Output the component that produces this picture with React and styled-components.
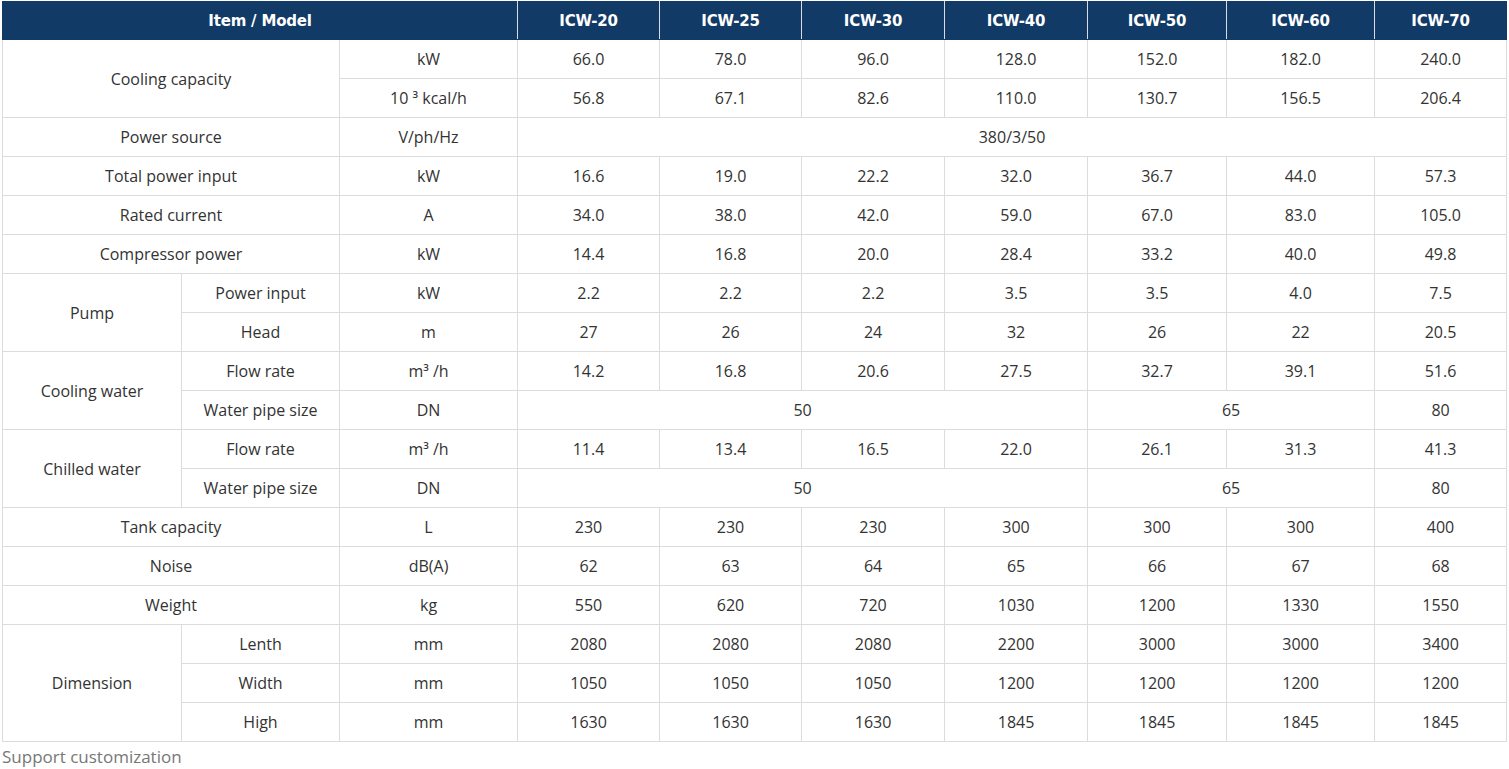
import React from "react";
import styled, { createGlobalStyle } from "styled-components";

const Global = createGlobalStyle`
  html, body { margin: 0; padding: 0; background: #fff; }
  body { font-family: "Open Sans", "Noto Sans CJK SC", sans-serif; }
`;

const Page = styled.div`
  padding: 1px 3px 0 2px;
`;

const Table = styled.table`
  width: 1504px;
  border-collapse: collapse;
  table-layout: fixed;
  font-size: 16px;
  line-height: 20px;
  color: #333;
`;

const Head = styled.th`
  background: #123a66;
  color: #fff;
  font-family: "DejaVu Sans", sans-serif;
  font-weight: 700;
  font-size: 15px;
  letter-spacing: -0.2px;
  height: 37px;
  padding: 0;
  text-align: center;
  border: 1px solid #123a66;
  border-left-color: #d9dde3;
  border-right-color: #d9dde3;
  &:first-child { border-left-color: #123a66; }
  &:last-child { border-right-color: #123a66; }
`;

const Cell = styled.td`
  height: 38px;
  padding: 0;
  text-align: center;
  border: 1px solid #dcdcdc;
  font-weight: 400;
`;

const Note = styled.div`
  font-size: 17px;
  line-height: 22px;
  color: #777;
  padding-top: 4px;
`;

const widths = [179, 158, 178, 142, 142, 143, 143, 139, 148, 132];
const models = ["ICW-20", "ICW-25", "ICW-30", "ICW-40", "ICW-50", "ICW-60", "ICW-70"];

const Vals = ({ v }) => v.map((x, i) => <Cell key={i}>{x}</Cell>);
const Pipe = () => (
  <>
    <Cell colSpan={4}>50</Cell>
    <Cell colSpan={2}>65</Cell>
    <Cell>80</Cell>
  </>
);

export default function App() {
  return (
    <Page>
      <Global />
      <Table>
        <colgroup>
          {widths.map((w, i) => (
            <col key={i} style={{ width: w }} />
          ))}
        </colgroup>
        <thead>
          <tr>
            <Head colSpan={3}>Item / Model</Head>
            {models.map((m) => (
              <Head key={m}>{m}</Head>
            ))}
          </tr>
        </thead>
        <tbody>
          <tr>
            <Cell colSpan={2} rowSpan={2}>Cooling capacity</Cell>
            <Cell>kW</Cell>
            <Vals v={["66.0", "78.0", "96.0", "128.0", "152.0", "182.0", "240.0"]} />
          </tr>
          <tr>
            <Cell>10 ³ kcal/h</Cell>
            <Vals v={["56.8", "67.1", "82.6", "110.0", "130.7", "156.5", "206.4"]} />
          </tr>
          <tr>
            <Cell colSpan={2}>Power source</Cell>
            <Cell>V/ph/Hz</Cell>
            <Cell colSpan={7}>380/3/50</Cell>
          </tr>
          <tr>
            <Cell colSpan={2}>Total power input</Cell>
            <Cell>kW</Cell>
            <Vals v={["16.6", "19.0", "22.2", "32.0", "36.7", "44.0", "57.3"]} />
          </tr>
          <tr>
            <Cell colSpan={2}>Rated current</Cell>
            <Cell>A</Cell>
            <Vals v={["34.0", "38.0", "42.0", "59.0", "67.0", "83.0", "105.0"]} />
          </tr>
          <tr>
            <Cell colSpan={2}>Compressor power</Cell>
            <Cell>kW</Cell>
            <Vals v={["14.4", "16.8", "20.0", "28.4", "33.2", "40.0", "49.8"]} />
          </tr>
          <tr>
            <Cell rowSpan={2}>Pump</Cell>
            <Cell>Power input</Cell>
            <Cell>kW</Cell>
            <Vals v={["2.2", "2.2", "2.2", "3.5", "3.5", "4.0", "7.5"]} />
          </tr>
          <tr>
            <Cell>Head</Cell>
            <Cell>m</Cell>
            <Vals v={["27", "26", "24", "32", "26", "22", "20.5"]} />
          </tr>
          <tr>
            <Cell rowSpan={2}>Cooling water</Cell>
            <Cell>Flow rate</Cell>
            <Cell>m³ /h</Cell>
            <Vals v={["14.2", "16.8", "20.6", "27.5", "32.7", "39.1", "51.6"]} />
          </tr>
          <tr>
            <Cell>Water pipe size</Cell>
            <Cell>DN</Cell>
            <Pipe />
          </tr>
          <tr>
            <Cell rowSpan={2}>Chilled water</Cell>
            <Cell>Flow rate</Cell>
            <Cell>m³ /h</Cell>
            <Vals v={["11.4", "13.4", "16.5", "22.0", "26.1", "31.3", "41.3"]} />
          </tr>
          <tr>
            <Cell>Water pipe size</Cell>
            <Cell>DN</Cell>
            <Pipe />
          </tr>
          <tr>
            <Cell colSpan={2}>Tank capacity</Cell>
            <Cell>L</Cell>
            <Vals v={["230", "230", "230", "300", "300", "300", "400"]} />
          </tr>
          <tr>
            <Cell colSpan={2}>Noise</Cell>
            <Cell>dB(A)</Cell>
            <Vals v={["62", "63", "64", "65", "66", "67", "68"]} />
          </tr>
          <tr>
            <Cell colSpan={2}>Weight</Cell>
            <Cell>kg</Cell>
            <Vals v={["550", "620", "720", "1030", "1200", "1330", "1550"]} />
          </tr>
          <tr>
            <Cell rowSpan={3}>Dimension</Cell>
            <Cell>Lenth</Cell>
            <Cell>mm</Cell>
            <Vals v={["2080", "2080", "2080", "2200", "3000", "3000", "3400"]} />
          </tr>
          <tr>
            <Cell>Width</Cell>
            <Cell>mm</Cell>
            <Vals v={["1050", "1050", "1050", "1200", "1200", "1200", "1200"]} />
          </tr>
          <tr>
            <Cell>High</Cell>
            <Cell>mm</Cell>
            <Vals v={["1630", "1630", "1630", "1845", "1845", "1845", "1845"]} />
          </tr>
        </tbody>
      </Table>
      <Note>Support customization</Note>
    </Page>
  );
}
